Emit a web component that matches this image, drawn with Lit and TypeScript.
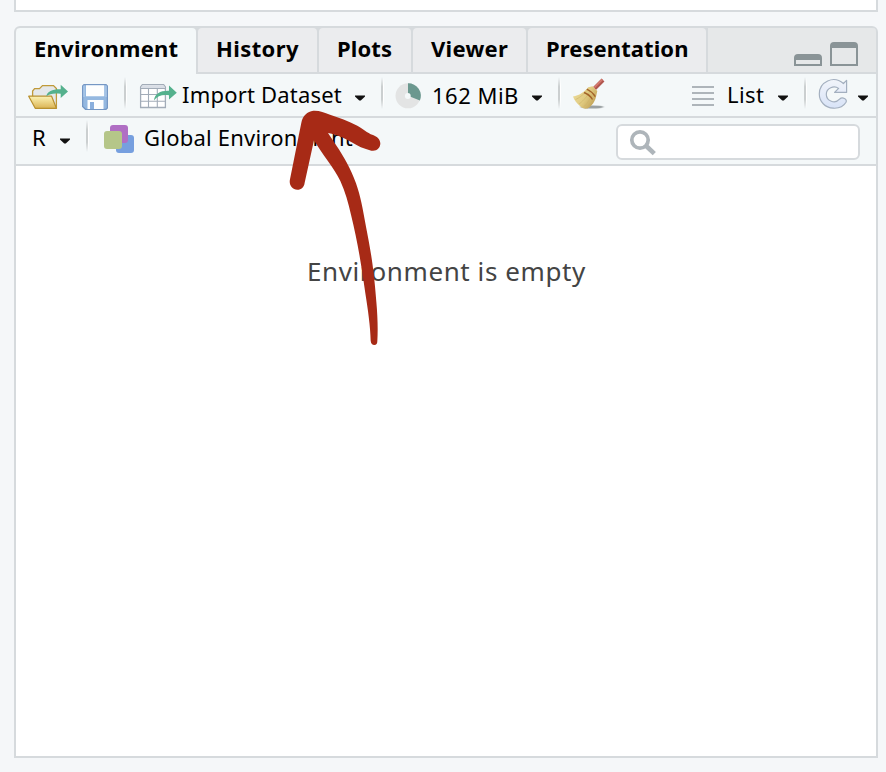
import { LitElement, html, css } from "lit";
import { customElement } from "lit/decorators.js";

const folder = html`<svg class="d4" width="40" height="28" viewBox="28 83 40 28">
  <defs>
    <linearGradient id="fg" x1="0" y1="0" x2="0" y2="1"><stop offset="0" stop-color="#fcf3b4"/><stop offset="1" stop-color="#dbb455"/></linearGradient>
  </defs>
  <path d="M32.6 96V91L34.6 88.6H39.5L42.5 85.6H53.5L56.4 88.5V108H40Z" fill="#e5e8ea" stroke="#c09a3a" stroke-width="1.3"/>
  <path d="M28.7 96.2H51.6L56.4 108.3H35.2Z" fill="url(#fg)" stroke="#b9912f" stroke-width="1.2" stroke-linejoin="round"/>
  <path d="M46.3 96.3C47.5 91 52.5 89 60.7 89.2V84.8L68 91.4L60.7 98V93.8C54 93 50 93.5 46.3 96.3Z" fill="#54b18d"/>
</svg>`;

const disk = html`<svg class="d4 disk" width="26" height="28" viewBox="82 83 26 28">
  <path d="M84 84.6H106L107.4 86V108L106 109.3H85.5L82.6 106.5V86Z" fill="#94b8e0" stroke="#7597c4" stroke-width="1.3"/>
  <path d="M86 85.3H104.2V96.2H86Z" fill="#fdfefe"/>
  <path d="M84 85.5V97M106 85.5V97" stroke="#b4cfec" stroke-width="1"/>
  <path d="M87.5 100H103.5V109H87.5Z" fill="#fdfefe"/>
  <path d="M90 102H94V109H90Z" fill="#8aafdd"/>
</svg>`;

const tableIcon = html`<svg class="d4 table" width="38" height="28" viewBox="139 83 38 28">
  <path d="M140.6 87L142.4 84.7H163.6L165.4 87V107.5H140.6Z" fill="#fff" stroke="#a2acb8" stroke-width="1.3"/>
  <path d="M141.2 88V87L142.6 85.3H163.4L164.8 87V88Z" fill="#d9dee6"/>
  <path d="M140.6 88.5H165.4M140.6 94.5H165.4M140.6 101.3H165.4M148.5 88.5V107.5M157.3 88.5V107.5" stroke="#a2acb8" stroke-width="1.1"/>
  <path d="M154 100.5C154.5 93.5 160.5 90.4 169 90.7V85.6L176.8 92.7L169 99.5V95.3C162 94.4 157.5 96 154 100.5Z" fill="#54b18d"/>
</svg>`;

const pie = html`<svg class="d2 pie" width="27" height="28" viewBox="395 82 27 28">
  <circle cx="408" cy="95.8" r="12.5" fill="#e3e4e4"/>
  <path d="M408 95.8V83.3A12.5 12.5 0 0 1 419.9 100.6Z" fill="#6b988f"/>
  <circle cx="407.8" cy="96" r="2.9" fill="#f4f8f9"/>
</svg>`;

const broom = html`<svg class="u2 broom" width="34" height="34" viewBox="572 77 34 34">
  <defs><linearGradient id="bg" x1="0" y1="0" x2="1" y2="0.6"><stop offset="0" stop-color="#eee0a0"/><stop offset="0.6" stop-color="#e0ca80"/><stop offset="1" stop-color="#c2a257"/></linearGradient>
  <filter id="sh"><feGaussianBlur stdDeviation="1.2 0.6"/></filter></defs>
  <ellipse cx="592" cy="107" rx="11.5" ry="1.6" fill="#9aa0a2" filter="url(#sh)"/>
  <path d="M594.5 88.5L603 80" stroke="#b0564f" stroke-width="4"/>
  <path d="M594.2 87.6L602.4 79.4" stroke="#d57a70" stroke-width="1.5"/>
  <path d="M588.2 87.2L592.5 86.2L597.3 91L596.3 95.5C595.5 101 592 106 587.5 108.5C584.5 109 582.5 108.3 580 106C577 103.5 574.2 100.5 573 96.5C579 95.5 584.5 92 588.2 87.2Z" fill="url(#bg)"/>
  <path d="M587.5 90C582 96 579 98 575.5 99.5M589.5 92C586 98 582 102 579 104M591.5 94.5C590 100 586 105 583.5 107" stroke="#cdb168" stroke-width="0.6" fill="none"/>
  <path d="M586.8 89.2Q592 91.5 595.3 96.7M584 92.5Q589.5 94.5 592.5 99.5" stroke="#a3642a" stroke-width="1.4" fill="none"/>
</svg>`;

const lines = html`<svg class="d2" width="22" height="22" viewBox="692 85 22 22">
  <path d="M692 87H714M692 93H714M692 99H714M692 105H714" stroke="#aeb5ba" stroke-width="2"/>
</svg>`;

const refresh = html`<svg class="u2 refresh" width="30" height="32" viewBox="818 78 30 32">
  <defs><linearGradient id="rg" x1="0" y1="0" x2="0" y2="1"><stop offset="0" stop-color="#f1f4fa"/><stop offset="1" stop-color="#d8e3f7"/></linearGradient></defs>
  <path d="M846.6 80.3V92.4H834.6L838.6 88.4C834 85 826.3 88 826.3 94.3C826.3 101.3 835.2 104.3 839.5 99.2C842.3 96.6 847.6 98.8 846 102.3C843.5 106.5 838.5 108.5 833.3 108.2C825 107.7 819.3 101.5 819.3 94C819.3 82 833.5 74.8 843.4 83.5Z" fill="url(#rg)" stroke="#a3afbf" stroke-width="1.2" stroke-linejoin="round"/>
</svg>`;

const cubes = html`<svg class="cubes" width="30" height="28" viewBox="104 125 30 28">
  <rect x="116" y="135" width="18" height="18" rx="3" fill="#769fdf"/>
  <rect x="110" y="125" width="18" height="18" rx="3" fill="#b06fc4"/>
  <rect x="104" y="131" width="18" height="18" rx="3" fill="#b5c689"/>
</svg>`;

const magnifier = html`<svg width="28" height="28" viewBox="629 129 28 28">
  <circle cx="640" cy="140" r="8.2" fill="none" stroke="#aeb5ba" stroke-width="3.7"/>
  <path d="M645.7 145.5L654.3 153.6" stroke="#aeb5ba" stroke-width="4.6"/>
</svg>`;

const caret = html`<svg class="caret" width="12" height="6" viewBox="0 0 12 6"><path d="M1 0.5H11V1.5L6.8 5.5H5.2L1 1.5Z" fill="#111"/></svg>`;

const arrow = html`<svg class="arrow" width="130" height="260" viewBox="0 0 390 780">
  <path d="M130 32C112 34 98 47 94 68L60 238C56 255 66 268 82 269C94 269 102 262 104 248L132 121C157 164 192 203 211 243C226 275 235 310 243 344C262 420 275 500 286 580C294 630 301 680 302 722C303 731 307 735 313 735C319 735 322 731 322 724C324 690 323 650 319 605C312 510 302 450 288 380C278 325 272 290 258 250C242 205 220 168 200 138L174 99C205 105 222 114 245 127C262 138 282 147 304 152C320 155 331 144 331 130C330 117 322 111 309 105C290 98 280 87 262 77C236 63 205 52 180 44C162 37 148 31 130 32Z" fill="#a72a16"/>
</svg>`;

@customElement("app-root")
export class AppRoot extends LitElement {
  static styles = css`
    :host { display: flex; flex-direction: column; position: relative; width: 886px; height: 772px; overflow: hidden; box-sizing: border-box; padding: 0 8px 14px 14px; gap: 14px; background: #f5f7f9; color: #000; font: 22px/26px "Noto Sans", "Open Sans", sans-serif; }
    * { box-sizing: border-box; }
    svg { display: block; flex: none; }
    .above { flex: none; height: 12px; background: #fff; border: solid #d6dadd; border-width: 0 2px 2px; }
    .pane { flex: 1; min-height: 0; display: flex; flex-direction: column; background: #fff; border: 2px solid #d6dadd; border-radius: 6px 6px 0 0; overflow: hidden; }
    .tabs { flex: none; height: 46px; display: flex; background: #d6dadd; }
    .tab { flex: none; height: 44px; margin-right: 2px; padding: 7px 0 0 18px; background: #ebecee; border-radius: 4px 4px 0 0; font-weight: 700; white-space: nowrap; }
    .tab.on { height: 46px; background: #f4f8f9; }
    .env { width: 180px; letter-spacing: 0.25px; }
    .his { width: 119px; letter-spacing: 0.4px; }
    .plo { width: 92px; letter-spacing: 0.1px; }
    .vie { width: 113px; letter-spacing: 0.3px; }
    .pre { width: 178px; letter-spacing: 0.08px; }
    .wins { flex: 1; height: 44px; background: #e6e8e9; display: flex; justify-content: flex-end; align-items: flex-end; gap: 8px; padding: 0 18px 6px 0; }
    .min, .max { width: 28px; border: 2px solid #8a9497; border-top-width: 6px; border-radius: 4px 4px 0 0; }
    .min { height: 12px; }
    .max { height: 24px; }
    .bar { flex: none; display: flex; align-items: center; background: #f4f8f9; border-bottom: 2px solid #d6dadd; white-space: nowrap; }
    .one { height: 44px; padding: 0 7px 0 12px; }
    .two { height: 48px; padding: 0 16px; }
    .d4 { margin-top: 4px; }
    .d2 { margin-top: 2px; }
    .u2 { margin-top: -2px; }
    .disk { margin-left: 14px; }
    .table { margin-left: 12px; }
    .pie, .broom, .refresh { margin-left: 11px; }
    .one .caret { margin-top: 6px; }
    .refresh + .caret { margin-left: 9px; }
    .cubes { margin: -4px 0 0 15px; }
    .sep { flex: none; width: 3px; height: 32px; margin: -4px 0 0 15px; background: linear-gradient(90deg, #cbcfd0 0 2px, #fff 2px); -webkit-mask: linear-gradient(transparent, #000 30% 70%, transparent); }
    .disk + .sep { margin-left: 16px; }
    .two .sep { margin-top: -10px; }
    .lab { flex: none; }
    .import { width: 172px; margin: -2px 0 0 5px; letter-spacing: 0.2px; }
    .mem { width: 99px; margin-left: 10px; letter-spacing: 0.5px; }
    .list { width: 50px; margin: -2px 0 0 13px; letter-spacing: 0.4px; }
    .lang { width: 27px; margin-top: -8px; }
    .scope { width: 220px; margin: -8px 0 0 10px; letter-spacing: 0.22px; }
    .grow { flex: 1; }
    .search { width: 244px; height: 36px; margin-top: 2px; border: 2px solid #d6dadd; border-radius: 6px; background: #fff; padding: 3px 0 0 11px; }
    .body { flex: 1; padding: 87px 0 0 291px; font-size: 26px; line-height: 36px; letter-spacing: 0.58px; color: #444; white-space: nowrap; }
    .arrow { position: absolute; left: 270px; top: 100px; }
  `;

  render() {
    return html`
      <div class="above"></div>
      <div class="pane">
        <div class="tabs">
          <div class="tab env on">Environment</div>
          <div class="tab his">History</div>
          <div class="tab plo">Plots</div>
          <div class="tab vie">Viewer</div>
          <div class="tab pre">Presentation</div>
          <div class="wins"><div class="min"></div><div class="max"></div></div>
        </div>
        <div class="bar one">
          ${folder}${disk}<i class="sep"></i>
          ${tableIcon}<span class="lab import">Import Dataset</span>${caret}<i class="sep"></i>
          ${pie}<span class="lab mem">162 MiB</span>${caret}<i class="sep"></i>
          ${broom}<div class="grow"></div>
          ${lines}<span class="lab list">List</span>${caret}<i class="sep"></i>
          ${refresh}${caret}
        </div>
        <div class="bar two">
          <span class="lab lang">R</span>${caret}<i class="sep"></i>
          ${cubes}<span class="lab scope">Global Environment</span>${caret}
          <div class="grow"></div>
          <div class="search">${magnifier}</div>
        </div>
        <div class="body">Environment is empty</div>
      </div>
      ${arrow}`;
  }
}
